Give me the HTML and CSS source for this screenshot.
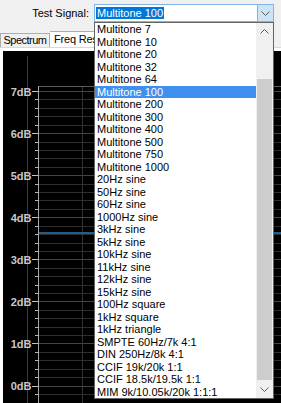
FILE: index.html
```html
<!DOCTYPE html>
<html>
<head>
<meta charset="utf-8">
<link rel="stylesheet" href="styles.css">
</head>
<body>
<div class="toolbar">
  <span class="label">Test Signal:</span>
  <div class="select">
    <span class="sel-text">Multitone 100</span>
    <span class="sel-btn"><svg width="9" height="5" viewBox="0 0 9 5"><polyline points="0.5,0.5 4.5,4.5 8.5,0.5" fill="none" stroke="#5a5a5a" stroke-width="1"/></svg></span>
  </div>
</div>
<div class="tabs">
  <div class="tab">Spectrum</div>
  <div class="tab active">Freq Response</div>
</div>
<div class="panel">
  <div class="chart">
    <svg width="278" height="352" viewBox="0 0 278 352" shape-rendering="crispEdges">
      <line x1="24.5" y1="5" x2="24.5" y2="352" stroke="#3a3a3a"/>
      <path stroke="#2e2e2e" fill="none" d="M36 48.9H278M36 57.3H278M36 65.7H278M36 74.2H278M36 91H278M36 99.4H278M36 107.8H278M36 116.2H278M36 133H278M36 141.5H278M36 149.9H278M36 158.3H278M36 175.1H278M36 183.5H278M36 192H278M36 200.4H278M36 217.2H278M36 225.6H278M36 234H278M36 242.4H278M36 259.3H278M36 267.7H278M36 276.1H278M36 284.5H278M36 301.3H278M36 309.7H278M36 318.2H278M36 326.6H278M36 343.4H278"/>
      <path stroke="#444" fill="none" d="M36 40.5H278M36 82.6H278M36 124.6H278M36 166.7H278M36 208.8H278M36 250.9H278M36 292.9H278M36 335H278"/>
      <line x1="79.5" y1="36" x2="79.5" y2="352" stroke="#333"/>
      <line x1="35" y1="35.5" x2="278" y2="35.5" stroke="#5a5a5a"/>
      <line x1="35.5" y1="35" x2="35.5" y2="352" stroke="#a8a8a8"/>
      <path stroke="#b4b4b4" fill="none" d="M32 48.9H35M32 57.3H35M32 65.7H35M32 74.2H35M32 91H35M32 99.4H35M32 107.8H35M32 116.2H35M32 133H35M32 141.5H35M32 149.9H35M32 158.3H35M32 175.1H35M32 183.5H35M32 192H35M32 200.4H35M32 217.2H35M32 225.6H35M32 234H35M32 242.4H35M32 259.3H35M32 267.7H35M32 276.1H35M32 284.5H35M32 301.3H35M32 309.7H35M32 318.2H35M32 326.6H35M32 343.4H35"/>
      <path stroke="#c0c0c0" fill="none" d="M29 40.5H35M29 82.6H35M29 124.6H35M29 166.7H35M29 208.8H35M29 250.9H35M29 292.9H35M29 335H35"/>
      <line x1="36" y1="182" x2="278" y2="182" stroke="#2f7cbd" stroke-width="1.5" shape-rendering="auto"/>
      <g class="ylab" text-anchor="end">
        <text x="28.5" y="44.5">7dB</text>
        <text x="28.5" y="86.6">6dB</text>
        <text x="28.5" y="128.6">5dB</text>
        <text x="28.5" y="170.7">4dB</text>
        <text x="28.5" y="212.8">3dB</text>
        <text x="28.5" y="254.9">2dB</text>
        <text x="28.5" y="296.9">1dB</text>
        <text x="28.5" y="339">0dB</text>
      </g>
    </svg>
  </div>
</div>
<div class="dropdown">
  <ul class="options">
    <li class="option">Multitone 7</li>
    <li class="option">Multitone 10</li>
    <li class="option">Multitone 20</li>
    <li class="option">Multitone 32</li>
    <li class="option">Multitone 64</li>
    <li class="option selected">Multitone 100</li>
    <li class="option">Multitone 200</li>
    <li class="option">Multitone 300</li>
    <li class="option">Multitone 400</li>
    <li class="option">Multitone 500</li>
    <li class="option">Multitone 750</li>
    <li class="option">Multitone 1000</li>
    <li class="option">20Hz sine</li>
    <li class="option">50Hz sine</li>
    <li class="option">60Hz sine</li>
    <li class="option">1000Hz sine</li>
    <li class="option">3kHz sine</li>
    <li class="option">5kHz sine</li>
    <li class="option">10kHz sine</li>
    <li class="option">11kHz sine</li>
    <li class="option">12kHz sine</li>
    <li class="option">15kHz sine</li>
    <li class="option">100Hz square</li>
    <li class="option">1kHz square</li>
    <li class="option">1kHz triangle</li>
    <li class="option">SMPTE 60Hz/7k 4:1</li>
    <li class="option">DIN 250Hz/8k 4:1</li>
    <li class="option">CCIF 19k/20k 1:1</li>
    <li class="option">CCIF 18.5k/19.5k 1:1</li>
    <li class="option">MIM 9k/10.05k/20k 1:1:1</li>
  </ul>
  <div class="scrollbar">
    <div class="sb-btn"><svg width="9" height="5" viewBox="0 0 9 5"><polyline points="0.5,4.5 4.5,0.5 8.5,4.5" fill="none" stroke="#606060"/></svg></div>
    <div class="sb-track"><div class="thumb"></div></div>
    <div class="sb-btn"><svg width="9" height="5" viewBox="0 0 9 5"><polyline points="0.5,0.5 4.5,4.5 8.5,0.5" fill="none" stroke="#606060"/></svg></div>
  </div>
</div>
</body>
</html>
```
FILE: styles.css
```css
html, body {
  margin: 0;
  padding: 0;
}
body {
  width: 281px;
  height: 403px;
  overflow: hidden;
  position: relative;
  background: #f0f0f0;
  font-family: "Liberation Sans", Arial, sans-serif;
  font-size: 11px;
  color: #000;
}
.toolbar {
  display: flex;
  align-items: center;
  padding-top: 4px;
  height: 18px;
}
.label {
  width: 89px;
  text-align: right;
  margin-right: 5px;
  line-height: 18px;
}
.select {
  width: 180px;
  height: 18px;
  box-sizing: border-box;
  border: 1px solid #7eb4ea;
  background: #fff;
  display: flex;
  align-items: center;
}
.sel-text {
  margin-left: 1px;
  padding: 0 1px;
  background: #0078d7;
  color: #fff;
  line-height: 12px;
}
.sel-btn {
  margin-left: auto;
  width: 16px;
  height: 16px;
  box-sizing: border-box;
  background: #cce4f7;
  border-left: 1px solid #7eb4ea;
  display: flex;
  align-items: center;
  justify-content: center;
}
.sel-btn svg { display: block; }
.tabs {
  display: flex;
  align-items: flex-end;
  height: 25px;
}
.tab {
  box-sizing: border-box;
  height: 14px;
  width: 50px;
  border: 1px solid #adadad;
  border-bottom: none;
  background: #f0f0f0;
  font-size: 11px;
  letter-spacing: -0.5px;
  line-height: 13px;
  text-align: center;
  white-space: nowrap;
  overflow: hidden;
}
.tab.active {
  height: 16px;
  width: 44px;
  border-left: none;
  border-right: none;
  background: #fff;
  line-height: 15px;
  text-align: left;
  padding-left: 4px;
  letter-spacing: -0.2px;
}
.panel {
  background: #fff;
  border-top: 1px solid #d9d9d9;
  padding: 3px 0 0 3px;
}
.chart {
  background: #000;
  height: 352px;
  overflow: hidden;
}
.chart svg { display: block; }
.ylab text {
  font-family: "Liberation Sans", Arial, sans-serif;
  font-size: 11px;
  font-weight: bold;
  fill: #c8c8c8;
}
.dropdown {
  position: absolute;
  left: 94px;
  top: 22px;
  width: 180px;
  height: 377px;
  box-sizing: border-box;
  border: 1px solid #646464;
  background: #fff;
  display: flex;
}
.options {
  list-style: none;
  margin: 0;
  padding: 0;
  flex: 1;
  min-width: 0;
}
.option {
  height: 12.5px;
  line-height: 12.5px;
  padding-left: 2px;
  white-space: nowrap;
  overflow: hidden;
}
.option.selected {
  background: #3f8fee;
  color: #fff;
}
.scrollbar {
  width: 17px;
  background: #f0f0f0;
  display: flex;
  flex-direction: column;
}
.sb-btn {
  height: 17px;
  display: flex;
  align-items: center;
  justify-content: center;
}
.sb-btn svg { display: block; }
.sb-track {
  flex: 1;
}
.thumb {
  margin: 39px 1px 0 1px;
  height: 301px;
  background: #cdcdcd;
}
```
